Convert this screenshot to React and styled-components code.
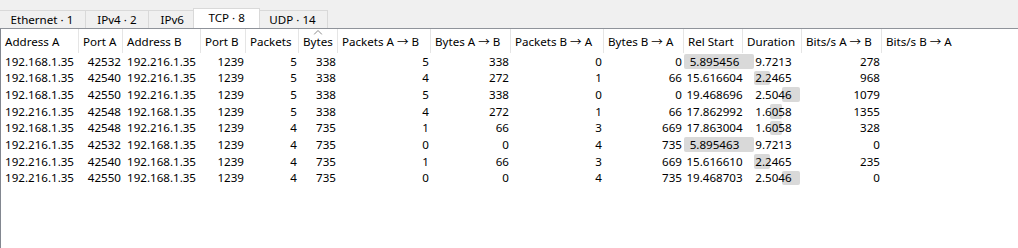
import React from "react";
import styled, { createGlobalStyle } from "styled-components";

const Global = createGlobalStyle`
  html, body { margin: 0; padding: 0; background: #ffffff; }
  body { font-family: "Noto Sans", "Open Sans", sans-serif; font-size: 11.6px; color: #000; }
  #root { width: 1018px; height: 248px; overflow: hidden; }
`;

const COLS = "78px 44px 78px 45px 53px 39px 93px 80px 93px 80px 59px 59px 80px 1fr";

const Window = styled.div`
  display: flex;
  flex-direction: column;
  width: 1018px;
  height: 248px;
`;

const TabBar = styled.div`
  display: flex;
  align-items: flex-end;
  height: 28px;
  background: #f0f0f0;
  flex: none;
  overflow: hidden;
`;

const Tab = styled.div`
  box-sizing: border-box;
  height: ${(p) => (p.$active ? 20 : 18)}px;
  padding: 0 ${(p) => (p.$active ? 14 : 11.5)}px ${(p) => (p.$active ? 2 : 0)}px;
  margin-left: ${(p) => (p.$first ? -2 : p.$active ? -3 : -1)}px;
  margin-right: ${(p) => (p.$active ? -2 : 0)}px;
  border: 1px solid #d9d9d9;
  border-bottom: none;
  background: ${(p) => (p.$active ? "#ffffff" : "#f0f0f0")};
  display: flex;
  align-items: center;
  white-space: nowrap;
  position: relative;
  z-index: ${(p) => (p.$active ? 1 : 0)};
`;

const Pane = styled.div`
  flex: 1;
  border-top: 1px solid #8f939a;
  border-left: 1px solid #828790;
  background: #ffffff;
`;

const HeaderRow = styled.div`
  display: grid;
  grid-template-columns: ${COLS};
  height: 24px;
`;

const HeaderCell = styled.div`
  position: relative;
  display: flex;
  align-items: center;
  padding: 0 2px 0 4px;
  border-right: ${(p) => (p.$last ? "none" : "1px solid #e5e5e5")};
  white-space: pre;
  overflow: hidden;
`;

const Arrow = styled.span`
  font-family: "Noto Sans CJK KR", "Noto Sans", sans-serif;
  font-size: 11.6px;
  margin: 0 3px;
`;

const SortMark = styled.svg`
  position: absolute;
  top: 1px;
  left: 50%;
  transform: translateX(-50%);
`;

const Row = styled.div`
  display: grid;
  grid-template-columns: ${COLS};
  height: 16.667px;
`;

const Cell = styled.div`
  grid-row: 1;
  grid-column: ${(p) => p.$col};
  display: flex;
  align-items: center;
  justify-content: ${(p) =>
    p.$align === "right" ? "flex-end" : p.$align === "center" ? "center" : "flex-start"};
  padding: 0 2px 0 4px;
  white-space: nowrap;
  position: relative;
  z-index: 1;
`;

const TimelineTrack = styled.div`
  grid-row: 1;
  grid-column: 11 / 13;
  display: flex;
  align-items: stretch;
  padding: 1px 0;
`;

const TimelineBar = styled.div`
  background: #d9d9d9;
  border-radius: 2px;
  flex: none;
`;

const tabs = [
  { label: "Ethernet · 1" },
  { label: "IPv4 · 2" },
  { label: "IPv6" },
  { label: "TCP · 8", active: true },
  { label: "UDP · 14" },
];

const headers = [
  "Address A",
  "Port A",
  "Address B",
  "Port B",
  "Packets",
  "Bytes",
  "Packets A → B",
  "Bytes A → B",
  "Packets B → A",
  "Bytes B → A",
  "Rel Start",
  "Duration",
  "Bits/s A → B",
  "Bits/s B → A",
];

const aligns = [
  "left", "right", "left", "right", "right", "right", "right", "right",
  "right", "right", "center", "center", "right", "right",
];

const rows = [
  ["192.168.1.35", "42532", "192.216.1.35", "1239", "5", "338", "5", "338", "0", "0", "5.895456", "9.7213", "278", ""],
  ["192.168.1.35", "42540", "192.216.1.35", "1239", "5", "338", "4", "272", "1", "66", "15.616604", "2.2465", "968", ""],
  ["192.168.1.35", "42550", "192.216.1.35", "1239", "5", "338", "5", "338", "0", "0", "19.468696", "2.5046", "1079", ""],
  ["192.216.1.35", "42548", "192.168.1.35", "1239", "5", "338", "4", "272", "1", "66", "17.862992", "1.6058", "1355", ""],
  ["192.168.1.35", "42548", "192.216.1.35", "1239", "4", "735", "1", "66", "3", "669", "17.863004", "1.6058", "328", ""],
  ["192.216.1.35", "42532", "192.168.1.35", "1239", "4", "735", "0", "0", "4", "735", "5.895463", "9.7213", "0", ""],
  ["192.216.1.35", "42540", "192.168.1.35", "1239", "4", "735", "1", "66", "3", "669", "15.616610", "2.2465", "235", ""],
  ["192.216.1.35", "42550", "192.168.1.35", "1239", "4", "735", "0", "0", "4", "735", "19.468703", "2.5046", "0", ""],
];

const starts = rows.map((r) => parseFloat(r[10]));
const ends = rows.map((r) => parseFloat(r[10]) + parseFloat(r[11]));
const t0 = Math.min(...starts);
const t1 = Math.max(...ends);
const TRACK = 116;
const scale = TRACK / (t1 - t0);

function HeaderLabel({ text }) {
  const parts = text.split(" → ");
  if (parts.length === 1) return text;
  return (
    <>
      {parts[0]}
      <Arrow>→</Arrow>
      {parts[1]}
    </>
  );
}

export default function App() {
  return (
    <>
      <Global />
      <Window>
        <TabBar>
          {tabs.map((t, i) => (
            <Tab key={t.label} $active={t.active} $first={i === 0}>
              {t.label}
            </Tab>
          ))}
        </TabBar>
        <Pane>
          <HeaderRow>
            {headers.map((h, i) => (
              <HeaderCell key={h} $last={i === headers.length - 1}>
                {h === "Bytes" && (
                  <SortMark width="9" height="5" viewBox="0 0 9 5">
                    <path d="M0.5 4.5 L4.5 0.5 L8.5 4.5" fill="none" stroke="#8a8a8a" strokeWidth="1" />
                  </SortMark>
                )}
                <HeaderLabel text={h} />
              </HeaderCell>
            ))}
          </HeaderRow>
          {rows.map((r, ri) => {
            const s = parseFloat(r[10]);
            const d = parseFloat(r[11]);
            return (
              <Row key={ri}>
                <TimelineTrack>
                  <TimelineBar
                    style={{ marginLeft: (s - t0) * scale, width: d * scale }}
                  />
                </TimelineTrack>
                {r.map((v, ci) => (
                  <Cell key={ci} $col={ci + 1} $align={aligns[ci]}>
                    {v}
                  </Cell>
                ))}
              </Row>
            );
          })}
        </Pane>
      </Window>
    </>
  );
}
